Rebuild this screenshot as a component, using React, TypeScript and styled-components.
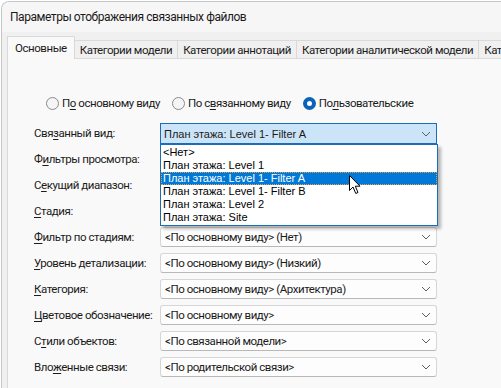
import styled, { createGlobalStyle } from 'styled-components';

const GlobalStyle = createGlobalStyle`
  html, body {
    margin: 0;
    padding: 0;
    background: #ffffff;
    overflow: hidden;
  }
  body {
    font-family: Roboto, "Noto Sans", sans-serif;
    font-size: 11.5px;
    letter-spacing: -0.45px;
    color: #1b1b1b;
  }
`;

const Window = styled.div`
  margin: 1px 0 0 1px;
  height: 387px;
  border: 1px solid #c6c6c6;
  border-right: none;
  border-bottom: none;
  border-radius: 8px 0 0 0;
  background: #f0f0f0;
  overflow: hidden;
  display: flex;
  flex-direction: column;
`;

const TitleBar = styled.div`
  height: 30px;
  flex: none;
  display: flex;
  align-items: center;
  padding-left: 8px;
  background: #f6f6f6;
  font-size: 12px;
  color: #1a1a1a;
`;

const Body = styled.div`
  flex: 1;
  display: flex;
  flex-direction: column;
  padding: 5px 0 0 5px;
  overflow: hidden;
`;

const TabStrip = styled.div`
  display: flex;
  align-items: flex-end;
  height: 21px;
  flex: none;
  white-space: nowrap;
`;

const Tab = styled.div<{ $active?: boolean }>`
  display: flex;
  align-items: center;
  flex: none;
  border: 1px solid #d9d9d9;
  ${p =>
    p.$active
      ? `
    height: 22px;
    padding: 0 7px;
    background: #f9f9f9;
    border-bottom: none;
    margin-bottom: -1px;
    position: relative;
    z-index: 1;
  `
      : `
    height: 17px;
    padding: 0 5px;
    background: #f0f0f0;
    border-left: none;
    border-bottom: none;
  `}
`;

const Panel = styled.div`
  flex: 1;
  background: #f9f9f9;
  border: 1px solid #d9d9d9;
  border-right: none;
  padding: 36px 0 0 26px;
`;

const RadioRow = styled.div`
  display: flex;
  align-items: center;
  gap: 12px;
  height: 16px;
  margin-left: 12px;
`;

const RadioOption = styled.label`
  display: flex;
  align-items: center;
  gap: 3px;
  white-space: nowrap;
`;

const RadioCircle = styled.span<{ $checked?: boolean }>`
  box-sizing: border-box;
  width: 13px;
  height: 13px;
  border-radius: 50%;
  flex: none;
  ${p =>
    p.$checked
      ? `
    background: #ffffff;
    border: 4px solid #0a63b8;
  `
      : `
    background: #f5f5f5;
    border: 1px solid #8a8a8a;
  `}
`;

const Key = styled.span`
  text-decoration: underline;
  text-underline-offset: 2px;
`;

const Form = styled.div`
  display: grid;
  grid-template-columns: 126px 277px;
  grid-auto-rows: 20px;
  row-gap: 6px;
  margin-top: 12px;
  align-items: center;
`;

const Label = styled.div`
  white-space: nowrap;
  color: #1b1b1b;
`;

const ComboCell = styled.div`
  position: relative;
  height: 20px;
`;

const Combo = styled.div<{ $open?: boolean }>`
  box-sizing: border-box;
  height: ${p => (p.$open ? '21px' : '20px')};
  display: flex;
  align-items: center;
  justify-content: space-between;
  padding: 0 5px 0 4px;
  white-space: nowrap;
  ${p =>
    p.$open
      ? `
    background: #cce4f7;
    border: 1px solid #1d6cb8;
    font-family: "Liberation Sans", Arial, sans-serif;
    font-size: 11px;
    letter-spacing: 0;
    padding-left: 3px;
  `
      : `
    background: #fdfdfd;
    border: 1px solid #d6d6d6;
    border-bottom-color: #b8b8b8;
    border-radius: 3px;
  `}
`;

const DropList = styled.div`
  position: absolute;
  top: 21px;
  left: 0;
  width: 278px;
  box-sizing: border-box;
  background: #ffffff;
  border: 1px solid #1d6cb8;
  padding: 1px 0 1px;
  z-index: 5;
  box-shadow: 3px 3px 3px rgba(0, 0, 0, 0.28);
  font-family: "Liberation Sans", Arial, sans-serif;
  font-size: 11px;
  letter-spacing: 0;
  color: #000000;
`;

const ListItem = styled.div<{ $selected?: boolean }>`
  box-sizing: border-box;
  height: 13px;
  line-height: 13px;
  padding-left: 2px;
  white-space: nowrap;
  ${p =>
    p.$selected
      ? `
    background: #0078d7;
    color: #ffffff;
    outline: 1px dotted #e8a040;
    outline-offset: -1px;
  `
      : ''}
`;

const Pointer = styled.svg`
  position: absolute;
  left: 188px;
  top: 30px;
  z-index: 6;
`;

const Chevron = () => (
  <svg width="10" height="6" viewBox="0 0 10 6">
    <path d="M1 1 L5 5 L9 1" fill="none" stroke="#606060" strokeWidth="1" />
  </svg>
);

const items = [
  '<Нет>',
  'План этажа: Level 1',
  'План этажа: Level 1- Filter A',
  'План этажа: Level 1- Filter B',
  'План этажа: Level 2',
  'План этажа: Site',
];

const rows: { label: React.ReactNode; value: string }[] = [
  { label: <>Ф<Key>и</Key>льтры просмотра:</>, value: '' },
  { label: <>С<Key>е</Key>кущий диапазон:</>, value: '' },
  { label: <><Key>С</Key>тадия:</>, value: '' },
  { label: <><Key>Ф</Key>ильтр по стадиям:</>, value: '<По основному виду> (Нет)' },
  { label: <><Key>У</Key>ровень детализации:</>, value: '<По основному виду> (Низкий)' },
  { label: <><Key>К</Key>атегория:</>, value: '<По основному виду> (Архитектура)' },
  { label: <><Key>Ц</Key>ветовое обозначение:</>, value: '<По основному виду>' },
  { label: <>С<Key>т</Key>или объектов:</>, value: '<По связанной модели>' },
  { label: <>Вло<Key>ж</Key>енные связи:</>, value: '<По родительской связи>' },
];

export default function App() {
  return (
    <>
      <GlobalStyle />
      <Window>
        <TitleBar>Параметры отображения связанных файлов</TitleBar>
        <Body>
          <TabStrip>
            <Tab $active>Основные</Tab>
            <Tab>Категории модели</Tab>
            <Tab>Категории аннотаций</Tab>
            <Tab>Категории аналитической модели</Tab>
            <Tab>Категории импорта</Tab>
          </TabStrip>
          <Panel>
            <RadioRow>
              <RadioOption>
                <RadioCircle />
                <span>П<Key>о</Key> основному виду</span>
              </RadioOption>
              <RadioOption>
                <RadioCircle />
                <span>По с<Key>в</Key>язанному виду</span>
              </RadioOption>
              <RadioOption>
                <RadioCircle $checked />
                <span>По<Key>л</Key>ьзовательские</span>
              </RadioOption>
            </RadioRow>
            <Form>
              <Label>Свя<Key>з</Key>анный вид:</Label>
              <ComboCell>
                <Combo $open>
                  <span>План этажа: Level 1- Filter A</span>
                  <Chevron />
                </Combo>
                <DropList>
                  {items.map(it => (
                    <ListItem key={it} $selected={it === 'План этажа: Level 1- Filter A'}>
                      {it}
                    </ListItem>
                  ))}
                  <Pointer width="13" height="20" viewBox="0 0 13 20">
                    <path
                      d="M0.5 0.5 L0.5 15.5 L4 12 L6.8 18.5 L9 17.5 L6.3 11.2 L11 11.2 Z"
                      fill="#ffffff"
                      stroke="#000000"
                      strokeWidth="1"
                      strokeLinejoin="round"
                    />
                  </Pointer>
                </DropList>
              </ComboCell>
              {rows.map((r, i) => (
                <>
                  <Label key={`l${i}`}>{r.label}</Label>
                  <ComboCell key={`c${i}`}>
                    {r.value && (
                      <Combo>
                        <span>{r.value}</span>
                        <Chevron />
                      </Combo>
                    )}
                  </ComboCell>
                </>
              ))}
            </Form>
          </Panel>
        </Body>
      </Window>
    </>
  );
}
